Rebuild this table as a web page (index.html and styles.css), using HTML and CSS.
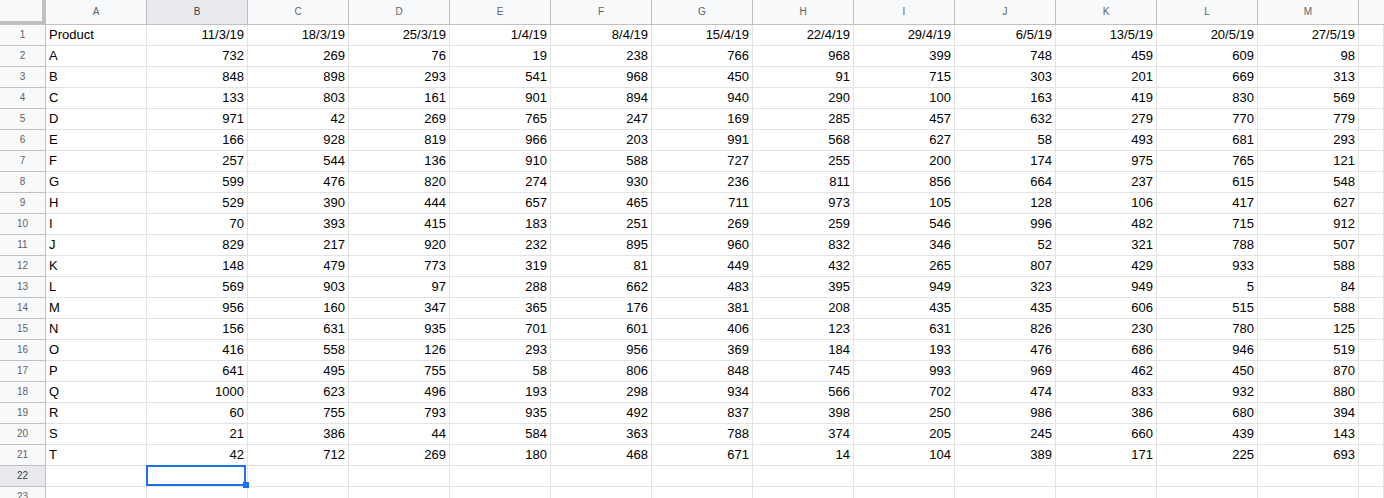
FILE: index.html
```html
<!DOCTYPE html>
<html>
<head>
<meta charset="utf-8">
<link rel="stylesheet" href="styles.css">
</head>
<body>
<div class="sheet">
<div class="corner"></div><div class="ch">A</div><div class="ch sel">B</div><div class="ch">C</div><div class="ch">D</div><div class="ch">E</div><div class="ch">F</div><div class="ch">G</div><div class="ch">H</div><div class="ch">I</div><div class="ch">J</div><div class="ch">K</div><div class="ch">L</div><div class="ch">M</div><div class="ch last"></div>
<div class="rh">1</div><div class="c">Product</div><div class="c n">11/3/19</div><div class="c n">18/3/19</div><div class="c n">25/3/19</div><div class="c n">1/4/19</div><div class="c n">8/4/19</div><div class="c n">15/4/19</div><div class="c n">22/4/19</div><div class="c n">29/4/19</div><div class="c n">6/5/19</div><div class="c n">13/5/19</div><div class="c n">20/5/19</div><div class="c n">27/5/19</div><div class="c"></div>
<div class="rh">2</div><div class="c">A</div><div class="c n">732</div><div class="c n">269</div><div class="c n">76</div><div class="c n">19</div><div class="c n">238</div><div class="c n">766</div><div class="c n">968</div><div class="c n">399</div><div class="c n">748</div><div class="c n">459</div><div class="c n">609</div><div class="c n">98</div><div class="c"></div>
<div class="rh">3</div><div class="c">B</div><div class="c n">848</div><div class="c n">898</div><div class="c n">293</div><div class="c n">541</div><div class="c n">968</div><div class="c n">450</div><div class="c n">91</div><div class="c n">715</div><div class="c n">303</div><div class="c n">201</div><div class="c n">669</div><div class="c n">313</div><div class="c"></div>
<div class="rh">4</div><div class="c">C</div><div class="c n">133</div><div class="c n">803</div><div class="c n">161</div><div class="c n">901</div><div class="c n">894</div><div class="c n">940</div><div class="c n">290</div><div class="c n">100</div><div class="c n">163</div><div class="c n">419</div><div class="c n">830</div><div class="c n">569</div><div class="c"></div>
<div class="rh">5</div><div class="c">D</div><div class="c n">971</div><div class="c n">42</div><div class="c n">269</div><div class="c n">765</div><div class="c n">247</div><div class="c n">169</div><div class="c n">285</div><div class="c n">457</div><div class="c n">632</div><div class="c n">279</div><div class="c n">770</div><div class="c n">779</div><div class="c"></div>
<div class="rh">6</div><div class="c">E</div><div class="c n">166</div><div class="c n">928</div><div class="c n">819</div><div class="c n">966</div><div class="c n">203</div><div class="c n">991</div><div class="c n">568</div><div class="c n">627</div><div class="c n">58</div><div class="c n">493</div><div class="c n">681</div><div class="c n">293</div><div class="c"></div>
<div class="rh">7</div><div class="c">F</div><div class="c n">257</div><div class="c n">544</div><div class="c n">136</div><div class="c n">910</div><div class="c n">588</div><div class="c n">727</div><div class="c n">255</div><div class="c n">200</div><div class="c n">174</div><div class="c n">975</div><div class="c n">765</div><div class="c n">121</div><div class="c"></div>
<div class="rh">8</div><div class="c">G</div><div class="c n">599</div><div class="c n">476</div><div class="c n">820</div><div class="c n">274</div><div class="c n">930</div><div class="c n">236</div><div class="c n">811</div><div class="c n">856</div><div class="c n">664</div><div class="c n">237</div><div class="c n">615</div><div class="c n">548</div><div class="c"></div>
<div class="rh">9</div><div class="c">H</div><div class="c n">529</div><div class="c n">390</div><div class="c n">444</div><div class="c n">657</div><div class="c n">465</div><div class="c n">711</div><div class="c n">973</div><div class="c n">105</div><div class="c n">128</div><div class="c n">106</div><div class="c n">417</div><div class="c n">627</div><div class="c"></div>
<div class="rh">10</div><div class="c">I</div><div class="c n">70</div><div class="c n">393</div><div class="c n">415</div><div class="c n">183</div><div class="c n">251</div><div class="c n">269</div><div class="c n">259</div><div class="c n">546</div><div class="c n">996</div><div class="c n">482</div><div class="c n">715</div><div class="c n">912</div><div class="c"></div>
<div class="rh">11</div><div class="c">J</div><div class="c n">829</div><div class="c n">217</div><div class="c n">920</div><div class="c n">232</div><div class="c n">895</div><div class="c n">960</div><div class="c n">832</div><div class="c n">346</div><div class="c n">52</div><div class="c n">321</div><div class="c n">788</div><div class="c n">507</div><div class="c"></div>
<div class="rh">12</div><div class="c">K</div><div class="c n">148</div><div class="c n">479</div><div class="c n">773</div><div class="c n">319</div><div class="c n">81</div><div class="c n">449</div><div class="c n">432</div><div class="c n">265</div><div class="c n">807</div><div class="c n">429</div><div class="c n">933</div><div class="c n">588</div><div class="c"></div>
<div class="rh">13</div><div class="c">L</div><div class="c n">569</div><div class="c n">903</div><div class="c n">97</div><div class="c n">288</div><div class="c n">662</div><div class="c n">483</div><div class="c n">395</div><div class="c n">949</div><div class="c n">323</div><div class="c n">949</div><div class="c n">5</div><div class="c n">84</div><div class="c"></div>
<div class="rh">14</div><div class="c">M</div><div class="c n">956</div><div class="c n">160</div><div class="c n">347</div><div class="c n">365</div><div class="c n">176</div><div class="c n">381</div><div class="c n">208</div><div class="c n">435</div><div class="c n">435</div><div class="c n">606</div><div class="c n">515</div><div class="c n">588</div><div class="c"></div>
<div class="rh">15</div><div class="c">N</div><div class="c n">156</div><div class="c n">631</div><div class="c n">935</div><div class="c n">701</div><div class="c n">601</div><div class="c n">406</div><div class="c n">123</div><div class="c n">631</div><div class="c n">826</div><div class="c n">230</div><div class="c n">780</div><div class="c n">125</div><div class="c"></div>
<div class="rh">16</div><div class="c">O</div><div class="c n">416</div><div class="c n">558</div><div class="c n">126</div><div class="c n">293</div><div class="c n">956</div><div class="c n">369</div><div class="c n">184</div><div class="c n">193</div><div class="c n">476</div><div class="c n">686</div><div class="c n">946</div><div class="c n">519</div><div class="c"></div>
<div class="rh">17</div><div class="c">P</div><div class="c n">641</div><div class="c n">495</div><div class="c n">755</div><div class="c n">58</div><div class="c n">806</div><div class="c n">848</div><div class="c n">745</div><div class="c n">993</div><div class="c n">969</div><div class="c n">462</div><div class="c n">450</div><div class="c n">870</div><div class="c"></div>
<div class="rh">18</div><div class="c">Q</div><div class="c n">1000</div><div class="c n">623</div><div class="c n">496</div><div class="c n">193</div><div class="c n">298</div><div class="c n">934</div><div class="c n">566</div><div class="c n">702</div><div class="c n">474</div><div class="c n">833</div><div class="c n">932</div><div class="c n">880</div><div class="c"></div>
<div class="rh">19</div><div class="c">R</div><div class="c n">60</div><div class="c n">755</div><div class="c n">793</div><div class="c n">935</div><div class="c n">492</div><div class="c n">837</div><div class="c n">398</div><div class="c n">250</div><div class="c n">986</div><div class="c n">386</div><div class="c n">680</div><div class="c n">394</div><div class="c"></div>
<div class="rh">20</div><div class="c">S</div><div class="c n">21</div><div class="c n">386</div><div class="c n">44</div><div class="c n">584</div><div class="c n">363</div><div class="c n">788</div><div class="c n">374</div><div class="c n">205</div><div class="c n">245</div><div class="c n">660</div><div class="c n">439</div><div class="c n">143</div><div class="c"></div>
<div class="rh">21</div><div class="c">T</div><div class="c n">42</div><div class="c n">712</div><div class="c n">269</div><div class="c n">180</div><div class="c n">468</div><div class="c n">671</div><div class="c n">14</div><div class="c n">104</div><div class="c n">389</div><div class="c n">171</div><div class="c n">225</div><div class="c n">693</div><div class="c"></div>
<div class="rh sel">22</div><div class="c"></div><div class="c active"></div><div class="c"></div><div class="c"></div><div class="c"></div><div class="c"></div><div class="c"></div><div class="c"></div><div class="c"></div><div class="c"></div><div class="c"></div><div class="c"></div><div class="c"></div><div class="c"></div>
<div class="rh">23</div><div class="c"></div><div class="c"></div><div class="c"></div><div class="c"></div><div class="c"></div><div class="c"></div><div class="c"></div><div class="c"></div><div class="c"></div><div class="c"></div><div class="c"></div><div class="c"></div><div class="c"></div><div class="c"></div>
</div>
</body>
</html>
```
FILE: styles.css
```css
html, body {
  margin: 0;
  padding: 0;
  background: #ffffff;
  overflow: hidden;
}
.sheet {
  display: grid;
  grid-template-columns: 46px repeat(13, 101px) 1fr;
  grid-template-rows: 25px;
  grid-auto-rows: 21px;
  width: 1384px;
  height: 498px;
  overflow: hidden;
  font-family: "Liberation Sans", Arial, sans-serif;
}
.sheet > div {
  box-sizing: border-box;
  border-right: 1px solid #e2e3e3;
  border-bottom: 1px solid #e2e3e3;
  white-space: nowrap;
  overflow: hidden;
}
.sheet > .corner {
  background: #f8f9fa;
  border-right: 4px solid #c0c0c0;
  border-bottom: 4px solid #c0c0c0;
}
.sheet > .ch {
  background: #f8f9fa;
  border-right: 1px solid #c0c0c0;
  border-bottom: 1px solid #c0c0c0;
  color: #5f6368;
  font-size: 10px;
  line-height: 24px;
  text-align: center;
}
.sheet > .ch.last {
  border-right: none;
}
.sheet > .rh {
  background: #f8f9fa;
  border-right: 1px solid #c0c0c0;
  border-bottom: 1px solid #c0c0c0;
  color: #5f6368;
  font-size: 10px;
  line-height: 20px;
  text-align: center;
}
.sheet > .sel {
  background: #e8eaed;
  color: #3c4043;
}
.sheet > .c {
  padding: 0 3px;
  font-size: 13px;
  line-height: 20px;
  color: #000000;
}
.sheet > .n {
  text-align: right;
}
.sheet > .active {
  position: relative;
  overflow: visible;
}
.active::before {
  content: "";
  position: absolute;
  left: -1px;
  top: -1px;
  right: 1px;
  bottom: 0;
  border: 2px solid #1a73e8;
}
.active::after {
  content: "";
  position: absolute;
  right: -2px;
  bottom: -2px;
  width: 6px;
  height: 6px;
  background: #1a73e8;
}
```
